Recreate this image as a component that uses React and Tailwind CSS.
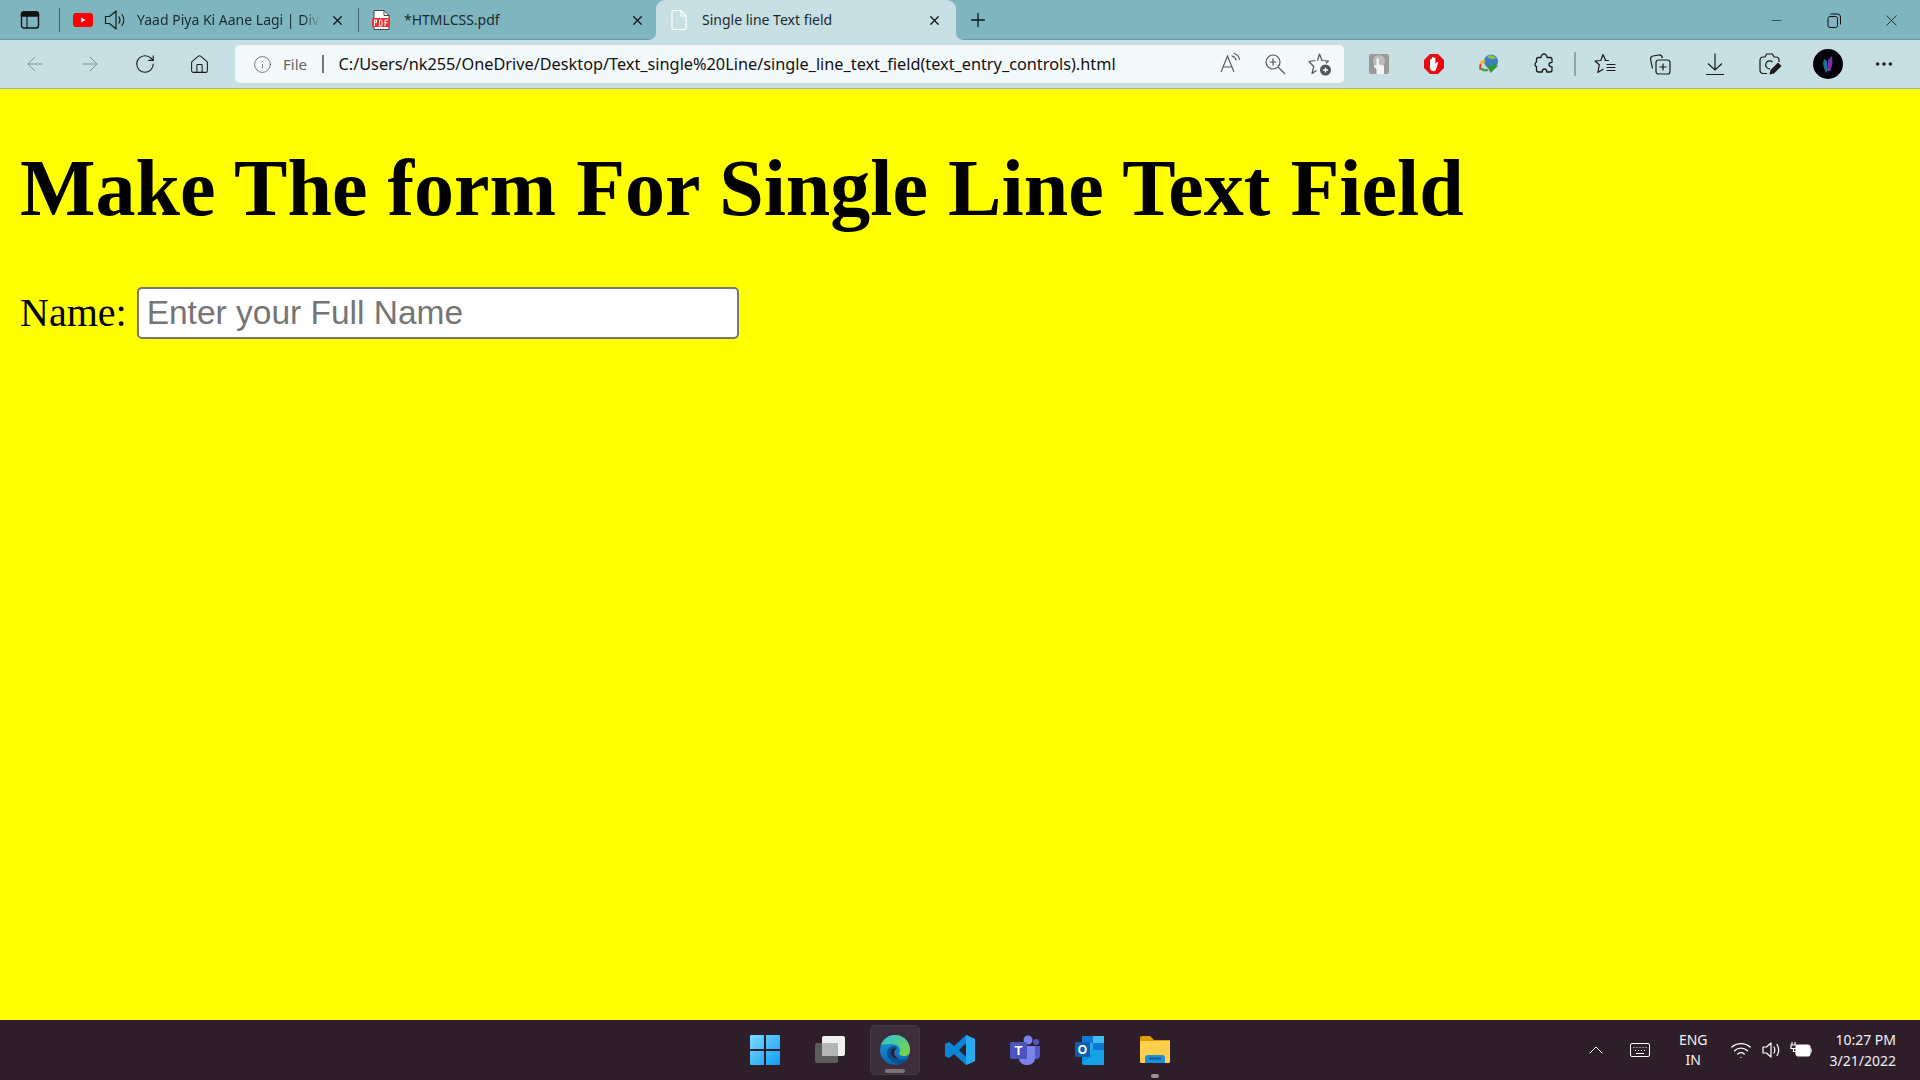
import React from 'react';
import { ArrowLeft, ArrowRight, RotateCw, Home, Info, X, Plus, Minus, ChevronUp, Wifi, MoreHorizontal } from 'lucide-react';

const Cell = ({ children, className = '' }) => (
  <div className={`w-[55px] h-[32px] flex items-center justify-center shrink-0 ${className}`}>{children}</div>
);

const Speaker = ({ size = 22, color = '#1a1a1a' }) => (
  <svg width={size} height={size} viewBox="0 0 22 22" fill="none" stroke={color} strokeWidth="1.2">
    <path d="M1.500 7.500h4L12 2v18l-6.500-5.500h-4z" strokeLinejoin="round" />
    <path d="M15 8c1.200 1.800 1.200 4.200 0 6M18 5.500c2.400 3.200 2.400 7.800 0 11" strokeLinecap="round" />
  </svg>
);

function TabStrip() {
  return (
    <div className="h-[40px] bg-[#7fb5bf] flex items-center shrink-0 relative shadow-[inset_0_-1px_0_#6a9ba5]">
      <div className="w-[59px] flex justify-center shrink-0">
        <svg width="20" height="20" viewBox="0 0 20 20" fill="none" stroke="#111" strokeWidth="1.4">
          <rect x="1.500" y="2" width="17" height="16" rx="2.500" />
          <path d="M1.500 4.500a2.500 2.500 0 0 1 2.500-2.500h12a2.500 2.500 0 0 1 2.500 2.500V6h-17z" fill="#111" />
          <path d="M7 6v12" strokeWidth="1.100" />
        </svg>
      </div>
      <div className="w-px h-[24px] bg-[#44666e] shrink-0" />
      <div className="w-[298px] h-[40px] flex items-center shrink-0 pl-[13px]">
        <svg width="20" height="14" viewBox="0 0 20 14" className="shrink-0">
          <rect width="20" height="14" rx="3" fill="#f00" />
          <path d="M8 4.500l4.500 2.500-4.500 2.500z" fill="#fff" />
        </svg>
        <div className="ml-[11px] shrink-0"><Speaker /></div>
        <span className="ml-[11px] w-[184px] overflow-hidden whitespace-nowrap text-[14px] leading-[20px] text-[#1c2a30] [mask-image:linear-gradient(to_right,#000_90%,transparent)]">Yaad Piya Ki Aane Lagi | Divya</span>
        <X size={15} strokeWidth={2} color="#111" className="ml-[9px] shrink-0" />
      </div>
      <div className="w-px h-[24px] bg-[#44666e] shrink-0" />
      <div className="w-[297px] h-[40px] flex items-center shrink-0 pl-[13px]">
        <svg width="18" height="20" viewBox="0 0 18 20" className="shrink-0">
          <path d="M2 .5h10l5 5v14H2z" fill="#fff" stroke="#444" strokeWidth="1" />
          <path d="M12 .5v5h5" fill="none" stroke="#444" />
          <rect x="0" y="8" width="18" height="9" rx="1" fill="#e8343a" />
          <path d="M2.500 16v-6h2v2.500h-2M7.500 10v6h1.500l1-1.500V11.500L9 10zM13 16v-6h3M13 12.800h2.500" fill="none" stroke="#fff" strokeWidth="1" />
        </svg>
        <span className="ml-[14px] w-[226px] text-[14px] leading-[20px] text-[#1c2a30]">*HTMLCSS.pdf</span>
        <X size={15} strokeWidth={2} color="#111" className="shrink-0" />
      </div>
      <div className="relative w-[300px] h-[40px] bg-[#c8dfe3] rounded-t-[9px] flex items-center shrink-0 pl-[15px]">
        <div className="absolute -left-[7px] bottom-0 w-[7px] h-[7px] bg-[#c8dfe3]">
          <div className="w-full h-full bg-[#7fb5bf] rounded-br-[7px]" />
        </div>
        <div className="absolute -right-[7px] bottom-0 w-[7px] h-[7px] bg-[#c8dfe3]">
          <div className="w-full h-full bg-[#7fb5bf] rounded-bl-[7px]" />
        </div>
        <svg width="16" height="20" viewBox="0 0 16 20" fill="none" stroke="#fff" strokeWidth="1.200" className="shrink-0">
          <path d="M1 2a1.500 1.500 0 0 1 1.500-1.500H10L15 6v12a1.500 1.500 0 0 1-1.500 1.500h-11A1.500 1.500 0 0 1 1 18z" />
          <path d="M10 .5V6h5" />
        </svg>
        <span className="ml-[15px] w-[225px] text-[14px] leading-[20px] text-[#1c2a30]">Single line Text field</span>
        <X size={15} strokeWidth={2} color="#111" className="shrink-0" />
      </div>
      <Plus size={22} strokeWidth={1.400} color="#111" className="ml-[11px] shrink-0" />
      <div className="ml-auto flex items-center text-[#111]">
        <div className="w-[57px] flex justify-center"><Minus size={15} strokeWidth={1} /></div>
        <div className="w-[57px] flex justify-center">
          <svg width="14" height="15" viewBox="0 0 14 15" fill="none" stroke="#111" strokeWidth="1">
            <rect x="1" y="3.500" width="9.500" height="11" rx="2" />
            <path d="M3.500 1h7a3 3 0 0 1 3 3v7.500" />
          </svg>
        </div>
        <div className="w-[58px] flex justify-center"><X size={19} strokeWidth={1} /></div>
      </div>
    </div>
  );
}

function Toolbar() {
  return (
    <div className="h-[49px] bg-[#c8dfe3] border-b border-[#9fb4b8] flex items-center shrink-0 pl-[7px] box-border">
      <Cell><ArrowLeft size={24} strokeWidth={1} color="#7f8f93" /></Cell>
      <Cell><ArrowRight size={24} strokeWidth={1} color="#7f8f93" /></Cell>
      <Cell><RotateCw size={22} strokeWidth={1.200} color="#1a1a1a" /></Cell>
      <Cell><Home size={21} strokeWidth={1.200} color="#1a1a1a" /></Cell>
      <div className="ml-[8px] w-[1109px] h-[38px] bg-[#f3f8fa] rounded-[5px] flex items-center shrink-0 pl-[18px]">
        <Info size={19} strokeWidth={1} color="#555" className="shrink-0" />
        <span className="ml-[11px] text-[15px] text-[#666]">File</span>
        <div className="ml-[15px] w-[1.500px] h-[18px] bg-[#777] shrink-0" />
        <span className="ml-[15px] text-[16.300px] leading-[22px] text-[#111] whitespace-nowrap">C:/Users/nk255/OneDrive/Desktop/Text_single%20Line/single_line_text_field(text_entry_controls).html</span>
        <div className="ml-auto flex items-center pr-[12px] shrink-0">
          <svg width="24" height="24" viewBox="0 0 24 24" fill="none" stroke="#555" strokeWidth="1.100">
            <path d="M2 20L8.500 4 15 20M4.300 15h8.500" />
            <path d="M13 4c2 .5 3.500 2 4 4M15 1.500c3 .7 5 3 5.500 6" strokeLinecap="round" />
          </svg>
          <svg width="22" height="22" viewBox="0 0 22 22" fill="none" stroke="#555" strokeWidth="1.200" className="ml-[21px]">
            <circle cx="9" cy="9" r="7" />
            <path d="M14 14l7 7M9 5.500v7M5.500 9h7" />
          </svg>
          <svg width="24" height="24" viewBox="0 0 24 24" fill="none" stroke="#555" strokeWidth="1.200" className="ml-[22px]">
            <path d="M10.500 9.500L12.500 3l2.500 6.500 6.500.5-2.700 2.300M9.500 19.500l-4.500 3 1.700-7L2 10.500l6.500-1" strokeLinejoin="round" transform="translate(-1 -1)" />
            <circle cx="17.500" cy="18" r="5.500" fill="#555" stroke="none" />
            <path d="M17.500 15.500v5M15 18h5" stroke="#fff" strokeWidth="1.300" />
          </svg>
        </div>
      </div>
      <Cell className="ml-[7px]">
        <svg width="20" height="20" viewBox="0 0 20 20">
          <rect width="20" height="20" rx="2" fill="#9a9a9a" />
          <circle cx="10" cy="7" r="6" fill="#bcbcbc" />
          <path d="M7.500 20v-5L5 13v-2l2.500 1V5.500a1.200 1.200 0 0 1 2.500 0V10.500l5 1V20z" fill="#f4f4f4" />
        </svg>
      </Cell>
      <Cell>
        <svg width="20" height="20" viewBox="0 0 20 20">
          <path d="M6 0h8l6 6v8l-6 6H6l-6-6V6z" fill="#e60b12" />
          <path d="M6 13V6a.900.900 0 0 1 1.800 0V9.500V4a.900.900 0 0 1 1.800 0V9.500V4.500a.900.900 0 0 1 1.800 0V10l1.500-1.800c.9-.6 1.500 0 1.100 .8L11.800 16c-.6.800-1.300 1.200-2.600 1.200C7 17.200 6 15.500 6 13z" fill="#fff" />
        </svg>
      </Cell>
      <Cell>
        <svg width="20" height="20" viewBox="0 0 20 20">
          <circle cx="12" cy="7.500" r="7" fill="#3c7fc4" />
          <path d="M8 2.500c3-2 7-1.500 9 2-3 1.500-7 .5-9-2z" fill="#8dc04c" />
          <path d="M1 12.500a6 6 0 0 1 5-5.500" fill="none" stroke="#f2b230" strokeWidth="2.500" />
          <path d="M1.500 15.500a6 6 0 0 1 .5-5" fill="none" stroke="#d9352c" strokeWidth="1.800" />
          <path d="M2 14.500c3 2.500 5 2 7 1" fill="none" stroke="#4aa53c" strokeWidth="2.500" />
          <path d="M8 11.500h6V8.500l5 3.500-7.500 7z" fill="#2f9a34" />
        </svg>
      </Cell>
      <Cell>
        <svg width="20" height="22" viewBox="0 0 20 22" fill="none" stroke="#1a1a1a" strokeWidth="1.300" strokeLinejoin="round">
          <path d="M7 4.500C7 2.500 8.500 1 10 1s3 1.500 3 3.500h3c1.200 0 2 .8 2 2v2.800c-1.800 0-3 .8-3 2.200s1.200 2.300 3 2.300v3.200c0 1.200-.8 2-2 2h-3.200c0-1.800-.9-3-2.300-3s-2.300 1.200-2.300 3H4.500c-1.200 0-2-.8-2-2v-3.500C3 14 1 13.500 1 11.500S2.500 9 2.500 9V6.500c0-1.200.8-2 2-2z" />
        </svg>
      </Cell>
      <div className="w-[1.500px] h-[24px] bg-[#8fa5a9] shrink-0 ml-[3px] -mr-[2px]" />
      <Cell className="ml-[4px]">
        <svg width="22" height="22" viewBox="0 0 22 22" fill="none" stroke="#1a1a1a" strokeWidth="1.200" strokeLinejoin="round">
          <path d="M11.500 7L9 1.500 6.800 7.500 1 8l4.300 3.800L3.800 19.500 9.500 16" />
          <path d="M11 7.500h3.500M13 11.500h8M13 14.500h8M13 17.500h8" strokeLinecap="round" />
        </svg>
      </Cell>
      <Cell>
        <svg width="22" height="22" viewBox="0 0 22 22" fill="none" stroke="#1a1a1a" strokeWidth="1.200">
          <path d="M3.500 15.500L1.500 6A3 3 0 0 1 4 3l6-1c1.800-.3 3 1 3.500 3" />
          <rect x="7" y="7" width="14" height="14" rx="2.500" />
          <path d="M14 10.500v7M10.500 14h7" />
        </svg>
      </Cell>
      <Cell>
        <svg width="22" height="24" viewBox="0 0 22 24" fill="none" stroke="#1a1a1a" strokeWidth="1.200">
          <path d="M11 1.500V18M4 11.500L11 18l7-6.500M2 22.500h18" />
        </svg>
      </Cell>
      <Cell>
        <svg width="24" height="24" viewBox="0 0 24 24" fill="none" stroke="#1a1a1a" strokeWidth="1.200">
          <path d="M9 21.500H5a3 3 0 0 1-3-3V8a3 3 0 0 1 3-3h2l1.500-3h6L16 5h2a3 3 0 0 1 3 3v2" />
          <path d="M14.500 10a4 4 0 1 0-2.500 6.800" />
          <path d="M11.500 22.500l1-4.500 7.500-7.500 3.500 3.500-7.500 7.500z" fill="#1a1a1a" stroke="none" />
        </svg>
      </Cell>
      <Cell className="ml-[3px]">
        <svg width="30" height="30" viewBox="0 0 30 30">
          <circle cx="15" cy="15" r="15" fill="#05030a" />
          <path d="M11 10l3 2 1 9-2 3-2-5-1-4z" fill="#1b6f9a" />
          <path d="M15 11l4-4 .5 7-2 8-2.500 0z" fill="#7d2fa0" />
        </svg>
      </Cell>
      <Cell className="ml-[1px]"><MoreHorizontal size={22} strokeWidth={2} color="#222" /></Cell>
    </div>
  );
}

function Taskbar() {
  return (
    <div className="h-[60px] bg-[#2e1e2a] shrink-0 grid grid-cols-[1fr_auto_1fr] items-center">
      <div />
      <div className="flex items-center">
        <div className="w-[65px] h-[50px] flex items-center justify-center">
          <svg width="30" height="30" viewBox="0 0 30 30">
            <defs><linearGradient id="w" x1="0" y1="0" x2="1" y2="1"><stop offset="0" stopColor="#7bdcff" /><stop offset="1" stopColor="#0f9bf5" /></linearGradient></defs>
            <path d="M0 1a1 1 0 0 1 1-1h13v14H0zM16 0h13a1 1 0 0 1 1 1v13H16zM0 16h14v14H1a1 1 0 0 1-1-1zM16 16h14v13a1 1 0 0 1-1 1H16z" fill="url(#w)" />
          </svg>
        </div>
        <div className="w-[65px] h-[50px] flex items-center justify-center">
          <svg width="30" height="30" viewBox="0 0 30 30">
            <rect x="0" y="8" width="23" height="20" rx="2" fill="#5c5c5c" />
            <rect x="7" y="1" width="23" height="20" rx="2" fill="#f0f0f0" />
            <rect x="7" y="8" width="16" height="13" fill="#b5b5b5" />
          </svg>
        </div>
        <div className="relative w-[50px] mx-[7.500px] h-[50px] rounded-[5px] bg-[#3d2e3a] border border-[#463844] flex items-center justify-center box-border">
          <svg width="30" height="30" viewBox="0 0 30 30">
            <defs>
              <linearGradient id="e1" x1="0" y1="0" x2="1" y2="1"><stop offset="0" stopColor="#2bc4d8" /><stop offset="1" stopColor="#7fd53a" /></linearGradient>
              <linearGradient id="e2" x1="0" y1="0" x2="0" y2="1"><stop offset="0" stopColor="#1f9be6" /><stop offset="1" stopColor="#0b63ad" /></linearGradient>
            </defs>
            <circle cx="15" cy="15" r="15" fill="url(#e2)" />
            <path d="M1 10C3 4 9 0 15 0c9 0 15 7 15 15 0 4-2 6-6 6-3 0-5-1-5-3 1-1 1-2 1-3 0-3-3-6-8-6-5 0-9 0-11 1z" fill="url(#e1)" />
            <path d="M15 11c-5 0-8 3-8 7 0 5 5 10 11 11 4 0 8-2 10-6-3 2-7 2-10 1-3-1-5-4-4-7 0-2 2-3 3-4-.5-1-1-2-2-2z" fill="#0a4f8f" />
            <path d="M15 13.500c-3 0-4.500 2-4 5 .6 3 4 5.500 8 5-3-1-5.500-4-4.500-7 .2-1 1-2 2-2.600z" fill="#2e1e2a" />
          </svg>
          <div className="absolute bottom-[1px] left-1/2 -translate-x-1/2 w-[20px] h-[4px] rounded-full bg-[#7d7379]" />
        </div>
        <div className="w-[65px] h-[50px] flex items-center justify-center">
          <svg width="30" height="30" viewBox="0 0 30 30">
            <path d="M21 0l9 4v22l-9 4-12-11-5 4-4-2V9l4-2 5 4zM21 8l-7 7 7 7z" fill="#0a84d6" fillRule="evenodd" />
            <path d="M21 0l9 4v22l-9 4z" fill="#25a9ef" />
          </svg>
        </div>
        <div className="w-[65px] h-[50px] flex items-center justify-center">
          <svg width="30" height="30" viewBox="0 0 30 30">
            <circle cx="18" cy="5" r="4.500" fill="#7b83eb" />
            <circle cx="26" cy="7" r="3" fill="#5059c9" />
            <path d="M21 11h9v9a4 4 0 0 1-4 4h-5z" fill="#5059c9" />
            <path d="M9 11h16v12a7 7 0 0 1-7 7h-2a7 7 0 0 1-7-7z" fill="#7b83eb" />
            <rect x="0" y="7" width="17" height="17" rx="1.500" fill="#4b53bc" />
            <text x="8.500" y="20" textAnchor="middle" fontSize="13" fontWeight="700" fill="#fff" fontFamily="Liberation Sans, sans-serif">T</text>
          </svg>
        </div>
        <div className="w-[65px] h-[50px] flex items-center justify-center">
          <svg width="30" height="30" viewBox="0 0 30 30">
            <rect x="7" y="1" width="22" height="14" fill="#0f78d4" />
            <rect x="18" y="1" width="11" height="7" fill="#41bdf5" />
            <rect x="7" y="8" width="11" height="7" fill="#28a8ea" />
            <path d="M7 15h22v15H9a2 2 0 0 1-2-2z" fill="#14a3e8" />
            <path d="M30 13L18 21 7 15v13z" fill="#0c84d6" opacity=".6" />
            <rect x="0" y="7" width="15" height="15" rx="1.500" fill="#0e5fab" />
            <text x="7.500" y="19" textAnchor="middle" fontSize="12" fontWeight="700" fill="#fff" fontFamily="Liberation Sans, sans-serif">O</text>
          </svg>
        </div>
        <div className="relative w-[65px] h-[50px] flex items-center justify-center">
          <svg width="30" height="28" viewBox="0 0 30 28">
            <path d="M0 2a2 2 0 0 1 2-2h8l4 4h16v6H0z" fill="#e0a000" />
            <path d="M0 5h30v21a1 1 0 0 1-1 1H1a1 1 0 0 1-1-1z" fill="#ffcf4d" />
            <path d="M5 27v-5a3 3 0 0 1 3-3h14a3 3 0 0 1 3 3v5z" fill="#1c8fd6" />
            <rect x="9" y="21.500" width="12" height="2" fill="#0b5fa5" />
          </svg>
          <div className="absolute bottom-[-3px] left-1/2 -translate-x-1/2 w-[8px] h-[4px] rounded-full bg-[#9b9398]" />
        </div>
      </div>
      <div className="flex items-center justify-end text-white pr-[24px]">
        <ChevronUp size={24} strokeWidth={1} className="mr-[22px]" />
        <svg width="20" height="14" viewBox="0 0 20 14" fill="none" stroke="#fff" strokeWidth="1" className="mr-[29px]">
          <rect x=".5" y=".5" width="19" height="13" rx="1.500" />
          <path d="M3.500 4.500h1M6.500 4.500h1M9.500 4.500h1M12.500 4.500h1M15.500 4.500h1M5 7.500h1M8 7.500h1M11 7.500h1M14 7.500h1M6 10.500h8" />
        </svg>
        <div className="flex flex-col items-center text-[14px] leading-[20px] mr-[22px] text-[#f2f2f2]"><span>ENG</span><span>IN</span></div>
        <Wifi size={22} strokeWidth={1.400} className="mr-[9px]" />
        <svg width="22" height="22" viewBox="0 0 22 22" fill="none" stroke="#fff" strokeWidth="1.200" className="mr-[7px]">
          <path d="M2 8h3.500L10 4v14l-4.500-4H2z" strokeLinejoin="round" />
          <path d="M13 8c1 1.800 1 4.200 0 6M16 5.500c2 3.200 2 7.800 0 11" strokeLinecap="round" />
        </svg>
        <svg width="22" height="18" viewBox="0 0 22 18" fill="none" stroke="#fff" strokeWidth="1.200" className="mr-[18px]">
          <rect x="6" y="4" width="14" height="11" rx="2.500" fill="#fff" />
          <path d="M21 7.500v4" />
          <path d="M2 1v3M5 1v3M1 4h5.500v3.500H1zM3.500 7.500v3H6" />
        </svg>
        <div className="flex flex-col items-end text-[14px] leading-[21px] text-[#f2f2f2]"><span>10:27 PM</span><span>3/21/2022</span></div>
      </div>
    </div>
  );
}

export default function App() {
  return (
    <div className="w-[1920px] h-[1080px] overflow-hidden flex flex-col [font-family:'Noto_Sans',sans-serif]">
      <TabStrip />
      <Toolbar />
      <main className="flex-1 bg-[#ffff00] px-[20px] pt-[53px] [font-family:'Liberation_Serif',serif] text-black">
        <h1 className="text-[80px] font-bold leading-[92px] mb-[49px] whitespace-nowrap">Make The form For Single Line Text Field</h1>
        <div className="flex items-center gap-[10px] text-[40px]">
          <label>Name:</label>
          <input
            placeholder="Enter your Full Name"
            className="w-[602px] h-[52px] bg-white border-2 border-[#767676] rounded-[5px] px-[8px] text-[33.500px] [font-family:'Liberation_Sans',sans-serif] placeholder:text-[#757575] outline-none box-border"
          />
        </div>
      </main>
      <Taskbar />
    </div>
  );
}
